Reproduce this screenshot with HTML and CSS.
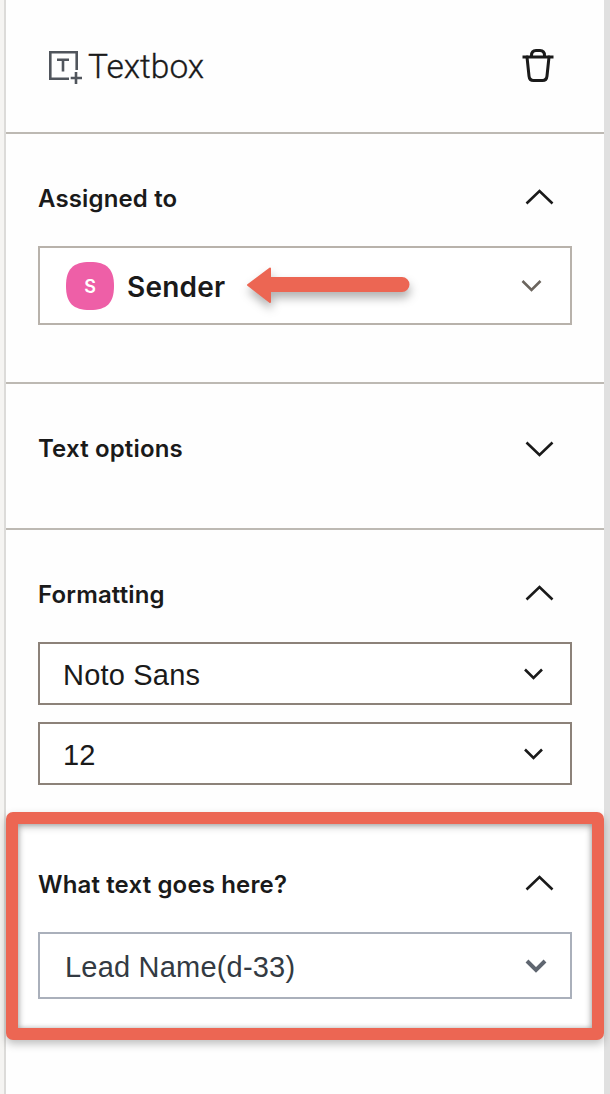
FILE: index.html
```html
<!DOCTYPE html>
<html lang="en">
<head>
<meta charset="utf-8">
<title>Textbox</title>
<link rel="stylesheet" href="styles.css">
</head>
<body>
<div class="shell">
  <aside class="panel">
    <header class="top">
      <div class="top-title">
        <svg class="tb-icon" width="34" height="34" viewBox="0 0 34 34" fill="none">
          <path d="M20 27.700H1.300V1.300H27.700V19" stroke="#50555c" stroke-width="2.600"/>
          <path d="M8 8.700H20M14 8.700V20.500" stroke="#50555c" stroke-width="2.600"/>
          <path d="M21.700 27H33M27 21V33" stroke="#50555c" stroke-width="2.600"/>
        </svg>
        <span class="top-text">Textbox</span>
      </div>
      <svg class="trash" width="32" height="33" viewBox="0 0 32 33" fill="none" stroke="#1a1a1a" stroke-width="3">
        <path d="M0.500 8H31.500"/>
        <path d="M9.500 8V6.500C9.500 3.500 11 1.500 14 1.500H18C21 1.500 22.500 3.500 22.500 6.500V8"/>
        <path d="M5 8L7 27C7.300 30 8.500 31.500 11.500 31.500H20.500C23.500 31.500 24.700 30 25 27L27 8" stroke-linecap="round"/>
      </svg>
    </header>

    <section class="sec sec-assigned">
      <div class="head">
        <h2 class="label">Assigned to</h2>
        <svg class="chev-big" width="29" height="17" viewBox="0 0 29 17" fill="none"><path d="M1.500 15.500L14.500 3L27.500 15.500" stroke="#1a1a1a" stroke-width="2.600"/></svg>
      </div>
      <div class="select select-sender">
        <div class="sender">
          <svg class="avatar" width="48" height="48" viewBox="0 0 48 48">
            <path d="M24 0C41 0 48 7 48 24C48 41 41 48 24 48C7 48 0 41 0 24C0 7 7 0 24 0Z" fill="#ee5fa7"/>
            <text class="avatar-text" x="24" y="30.500" text-anchor="middle">S</text>
          </svg>
          <span class="sender-name">Sender</span>
        </div>
        <svg class="chev-sender" width="21" height="14" viewBox="0 0 21 14" fill="none"><path d="M1.500 2L10.500 11L19.500 2" stroke="#6b655e" stroke-width="2.600"/></svg>
        <svg class="arrow" width="184" height="62" viewBox="0 0 184 62" fill="none">
          <path d="M28 25V15.500L6 32L28 49V38H160A6.500 6.500 0 0 0 160 25H28Z" fill="#ec6653" stroke="#ec6653" stroke-width="2" stroke-linejoin="round"/>
        </svg>
      </div>
    </section>

    <section class="sec sec-options">
      <div class="head">
        <h2 class="label">Text options</h2>
        <svg class="chev-big chev-down" width="29" height="17" viewBox="0 0 29 17" fill="none"><path d="M1.500 1.500L14.500 14L27.500 1.500" stroke="#1a1a1a" stroke-width="2.600"/></svg>
      </div>
    </section>

    <section class="sec sec-format">
      <div class="head">
        <h2 class="label">Formatting</h2>
        <svg class="chev-big" width="29" height="17" viewBox="0 0 29 17" fill="none"><path d="M1.500 15.500L14.500 3L27.500 15.500" stroke="#1a1a1a" stroke-width="2.600"/></svg>
      </div>
      <div class="stack">
        <div class="select select-plain"><span class="value">Noto Sans</span><svg width="21" height="14" viewBox="0 0 21 14" fill="none"><path d="M2 2.500L10.500 11L19 2.500" stroke="#1a1a1a" stroke-width="2.600"/></svg></div>
        <div class="select select-plain"><span class="value">12</span><svg width="21" height="14" viewBox="0 0 21 14" fill="none"><path d="M2 2.500L10.500 11L19 2.500" stroke="#1a1a1a" stroke-width="2.600"/></svg></div>
      </div>
    </section>

    <section class="callout">
      <div class="head">
        <h2 class="label">What text goes here?</h2>
        <svg class="chev-big" width="29" height="17" viewBox="0 0 29 17" fill="none"><path d="M1.500 15.500L14.500 3L27.500 15.500" stroke="#1a1a1a" stroke-width="2.600"/></svg>
      </div>
      <div class="select select-lead"><span class="value">Lead Name(d-33)</span><svg class="chev-lead" width="24" height="16" viewBox="0 0 24 16" fill="none"><path d="M3 3L12 12L21 3" stroke="#5f6670" stroke-width="4"/></svg></div>
    </section>
  </aside>
</div>
</body>
</html>
```
FILE: styles.css
```css
* { box-sizing: border-box; }
html, body { margin: 0; padding: 0; background: #fff; }
.shell {
  width: 610px;
  height: 1094px;
  padding-left: 4px;
  background: #f5f4f2;
  overflow: hidden;
}
.panel {
  height: 1094px;
  width: 606px;
  background: #fefefe;
  border-left: 2px solid #dcdbd9;
  border-right: 6px solid #e0e0e0;
  font-family: Inter, "Liberation Sans", sans-serif;
  color: #1a1a1a;
}
.top {
  height: 134px;
  padding: 0 50px 0 43px;
  display: flex;
  align-items: center;
  justify-content: space-between;
  border-bottom: 2px solid #bdb9b3;
}
.top-title { display: flex; align-items: center; gap: 5px; }
.tb-icon { display: block; margin-top: 4px; }
.top-text {
  font-family: Roboto, "Liberation Sans", sans-serif;
  font-weight: 300;
  font-size: 33.500px;
  line-height: 40px;
  margin-top: 1px;
  -webkit-text-stroke: 0.3px #1a1a1a;
}
.trash { display: block; margin-top: -1px; }
.sec {
  padding: 46px 32px 0;
  border-bottom: 2px solid #bdb9b3;
}
.sec-assigned { height: 250px; }
.sec-options { height: 146px; }
.sec-format { height: 282px; border-bottom: 0; }
.head {
  height: 36px;
  display: flex;
  align-items: center;
  justify-content: space-between;
  padding-right: 18px;
}
.label {
  margin: 2px 0 0;
  font-size: 24px;
  line-height: 36px;
  font-weight: 600;
  letter-spacing: 0.15px;
  color: #1a1a1a;
}
.chev-big { display: block; margin-top: -3px; }
.chev-down { margin-top: 3px; }
.select {
  margin-top: 30px;
  display: flex;
  align-items: center;
  justify-content: space-between;
  background: #fff;
  border: 2px solid #8c8279;
}
.value {
  font-family: "Liberation Sans", sans-serif;
  font-size: 29px;
  letter-spacing: 0.2px;
  margin-top: 4px;
}
.select-sender {
  position: relative;
  height: 79px;
  padding: 0 28px 0 26px;
  border-color: #b8b2ab;
}
.sender { display: flex; align-items: center; gap: 13px; }
.avatar { display: block; }
.avatar-text { font-size: 18px; font-weight: 600; fill: #fff; font-family: Inter, "Liberation Sans", sans-serif; }
.sender-name { font-size: 28px; font-weight: 600; letter-spacing: 0.2px; margin-top: 3px; }
.chev-sender { display: block; margin-top: 1px; }
.arrow {
  position: absolute;
  left: 202px;
  top: 5px;
  filter: drop-shadow(1px 6px 5px rgba(0, 0, 0, 0.3));
}
.stack { margin-top: 30px; display: flex; flex-direction: column; gap: 17px; }
.select-plain {
  margin-top: 0;
  height: 63px;
  padding: 0 26px 0 23px;
}
.select-plain svg { display: block; }
.callout {
  height: 228px;
  padding: 42px 20px 0;
  border: 12px solid #ec6653;
  border-radius: 7px;
  background: #fff;
  box-shadow: 0 4px 8px rgba(0, 0, 0, 0.25), inset 0 3px 7px rgba(0, 0, 0, 0.25), inset 2px 0 5px rgba(0, 0, 0, 0.12), inset -2px 0 5px rgba(0, 0, 0, 0.12);
}
.select-lead {
  height: 67px;
  padding: 0 22px 0 25px;
  border-color: #aab0bb;
  color: #333a42;
}
.chev-lead { display: block; }
```
